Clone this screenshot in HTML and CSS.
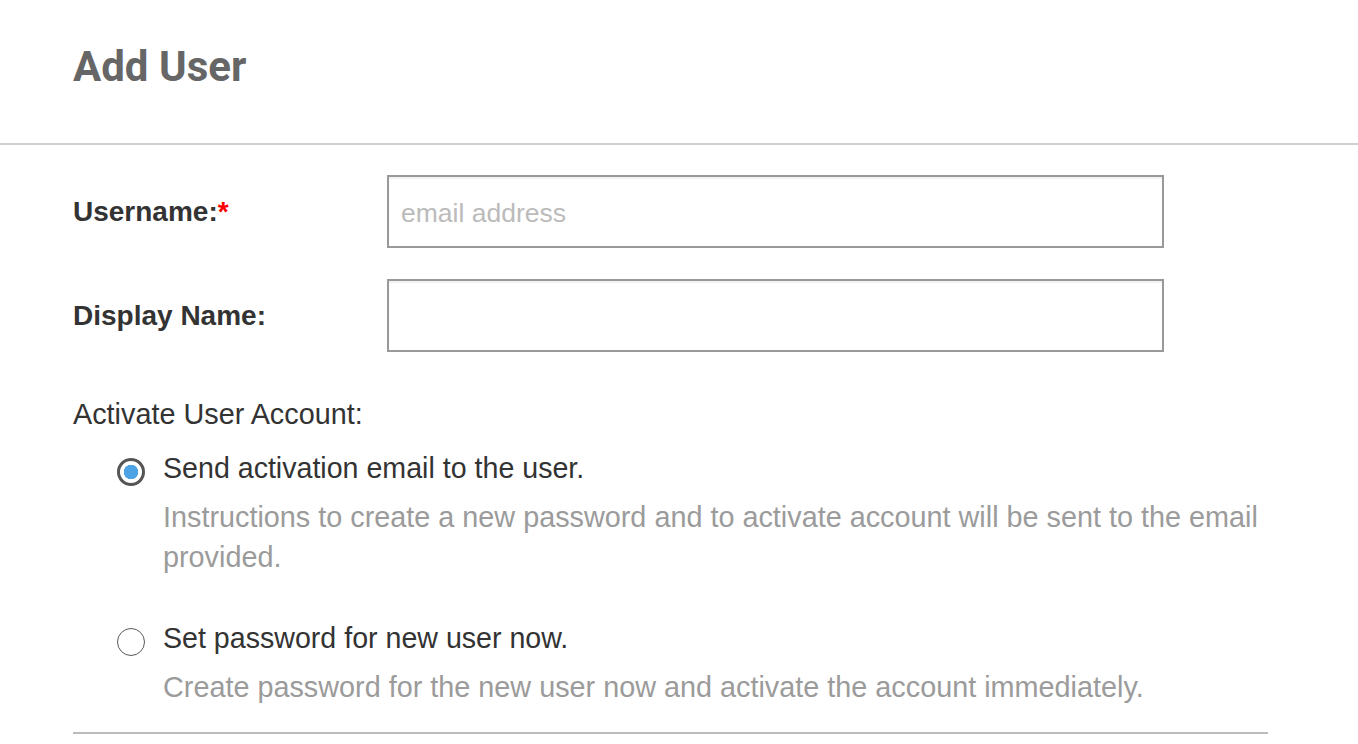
FILE: index.html
```html
<!DOCTYPE html>
<html lang="en">
<head>
    <meta charset="UTF-8">
    <meta name="viewport" content="width=device-width, initial-scale=1.0">
    <title>Add User</title>
    <link rel="stylesheet" href="styles.css">
</head>
<body>
    <div class="header">
        <h1>Add User</h1>
    </div>
    <form class="form">
        <div class="row">
            <label class="label" for="username">Username:<span class="req">*</span></label>
            <input class="field" id="username" type="text" placeholder="email address">
        </div>
        <div class="row">
            <label class="label" for="display">Display Name:</label>
            <input class="field" id="display" type="text">
        </div>

        <p class="group-title">Activate User Account:</p>

        <div class="option first">
            <span class="radio checked"></span>
            <div>
                <p class="option-title">Send activation email to the user.</p>
                <p class="option-desc">Instructions to create a new password and to activate account will be sent to the email provided.</p>
            </div>
        </div>
        <div class="option second">
            <span class="radio"></span>
            <div>
                <p class="option-title">Set password for new user now.</p>
                <p class="option-desc">Create password for the new user now and activate the account immediately.</p>
            </div>
        </div>
        <div class="rule"></div>
    </form>
</body>
</html>
```

FILE: styles.css
```css
body{
    margin: 0;
    padding: 0;
    background-color: white;
    font-family: "Liberation Sans", Arial, sans-serif;
    color: #333;
}

p{
    margin: 0;
}

.header{
    height: 145px;
    padding: 0 73px;
    border-bottom: 2px solid #cfcfcf;
    box-sizing: border-box;
}

h1{
    margin: 0;
    padding-top: 42px;
    font-family: Roboto, sans-serif;
    font-weight: 700;
    font-size: 42px;
    line-height: 50px;
    color: #666;
}

.form{
    width: 1195px;
    margin: 30px 0 0 73px;
}

.row{
    display: flex;
    align-items: center;
    height: 73px;
    margin-bottom: 31px;
}

.label{
    width: 314px;
    font-size: 28px;
    font-weight: 700;
    color: #333;
}

.req{
    color: #f00;
}

.field{
    width: 777px;
    height: 73px;
    box-sizing: border-box;
    border: 2px solid #999;
    border-radius: 0;
    padding: 3px 12px 0;
    font-family: "Liberation Sans", Arial, sans-serif;
    font-size: 26.5px;
    color: #333;
    box-shadow: inset 0 2px 2px rgba(0, 0, 0, 0.06);
    outline: none;
}

.field::placeholder{
    color: #bbb;
}

/* collapses with the row margin above it */
.group-title{
    margin-top: 42px;
    font-size: 28.8px;
    line-height: 40px;
}

.option{
    display: grid;
    grid-template-columns: 28px 1fr;
    column-gap: 18px;
    padding-left: 44px;
}

.option.first{
    margin-top: 14px;
}

.option.second{
    margin-top: 41px;
}

.radio{
    width: 28px;
    height: 28px;
    margin-top: 10px;
    box-sizing: border-box;
    border: 1.5px solid #5a5a5a;
    border-radius: 50%;
    background: white;
}

.radio.checked{
    border: 3px solid #555;
    background: radial-gradient(circle, #4da3e3 0 7px, white 7.5px);
}

.option-title{
    font-size: 28.6px;
    line-height: 40px;
    color: #333;
}

.option-desc{
    margin-top: 9px;
    font-size: 28.8px;
    line-height: 40px;
    color: #9b9b9b;
}

.rule{
    margin-top: 25px;
    border-top: 2px solid #bbb;
}
```
